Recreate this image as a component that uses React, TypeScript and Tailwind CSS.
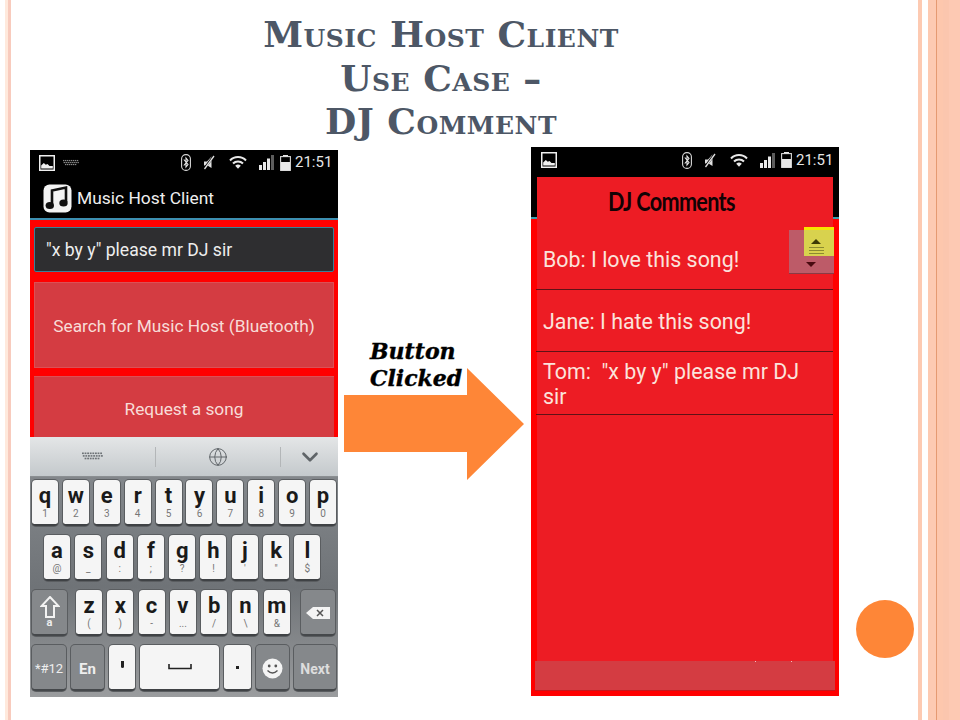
import React from 'react';
import { Globe, ChevronDown } from 'lucide-react';

const roboto = "font-['Roboto','Liberation_Sans',sans-serif]";

function ImageIcon() {
  return (
    <svg width="16" height="16" viewBox="0 0 16 16" className="block">
      <rect x="0.75" y="0.75" width="14.5" height="14.5" fill="#000" stroke="#f0f0f0" strokeWidth="1.5" />
      <path d="M2.2 13.5 L2.2 10.5 L4.8 8 L6.8 9.8 L8.5 9 L10.5 11 L13.8 11 L13.8 13.5 Z" fill="#f0f0f0" />
    </svg>
  );
}

function KeyboardIcon({ color = '#9a9a9a', width = 21, height = 9 }: { color?: string; width?: number; height?: number }) {
  const cells = [];
  for (let r = 0; r < 3; r++) {
    for (let c = 0; c < 8 - (r === 2 ? 2 : 0); c++) {
      cells.push(<rect key={`${r}-${c}`} x={c * 2.6 + (r === 2 ? 2.6 : 0) + (r === 1 ? 0.8 : 0)} y={r * 2.6 + 0.5} width="1.8" height="1.6" fill={color} />);
    }
  }
  return (
    <svg width={width} height={height} viewBox="0 0 21 9" className="block">
      {cells}
    </svg>
  );
}

function StatusIcons() {
  return (
    <>
      {/* bluetooth */}
      <svg width="10" height="17" viewBox="0 0 10 17" className="block">
        <rect x="0.6" y="0.6" width="8.8" height="15.8" rx="4.2" fill="none" stroke="#d8d8d8" strokeWidth="1.1" />
        <path d="M2.8 5.5 L7 10.5 L5 13 L5 4 L7 6.5 L2.8 11.5" fill="none" stroke="#e8e8e8" strokeWidth="1.1" />
      </svg>
      {/* mute */}
      <svg width="12" height="15" viewBox="0 0 12 15" className="block ml-[12px]">
        <path d="M1 10.5 L1 6.5 L4 6.5 L8.5 1.5 L8.5 13 L4.5 10.5 Z" fill="#e0e0e0" />
        <path d="M1 14 L11 0.5" stroke="#000" strokeWidth="2.2" />
        <path d="M1.5 14 L11 1" stroke="#e0e0e0" strokeWidth="1.3" />
      </svg>
      {/* wifi */}
      <svg width="18" height="13" viewBox="0 0 18 13" className="block ml-[14px]">
        <path d="M1 4.5 A11 11 0 0 1 17 4.5" fill="none" stroke="#e8e8e8" strokeWidth="2" />
        <path d="M4 7.5 A7 7 0 0 1 14 7.5" fill="none" stroke="#e8e8e8" strokeWidth="2" />
        <path d="M6.2 9.8 A4 4 0 0 1 11.8 9.8 L9 12.8 Z" fill="#e8e8e8" />
      </svg>
      {/* signal */}
      <svg width="15" height="15" viewBox="0 0 15 15" className="block ml-[12px]">
        <rect x="0" y="10" width="3" height="5" fill="#e8e8e8" />
        <rect x="4" y="7" width="3" height="8" fill="#e8e8e8" />
        <rect x="8" y="3.5" width="3" height="11.5" fill="#e8e8e8" />
        <rect x="12" y="0" width="3" height="15" fill="#5c5c5c" />
      </svg>
      {/* battery */}
      <svg width="11" height="16" viewBox="0 0 11 16" className="block ml-[6px]">
        <rect x="3" y="0" width="5" height="2" fill="#e8e8e8" />
        <rect x="0.6" y="1.6" width="9.8" height="13.8" fill="none" stroke="#d8d8d8" strokeWidth="1.1" />
        <rect x="1" y="7" width="9" height="8.5" fill="#e8e8e8" />
      </svg>
    </>
  );
}

function StatusBar({ keyboard }: { keyboard?: boolean }) {
  return (
    <div className={keyboard ? 'h-[28px] flex items-center bg-black pl-[9px] pb-[3px] shrink-0' : 'h-[28px] flex items-center bg-black pl-[10px] pb-[2px] shrink-0'}>
      <ImageIcon />
      {keyboard ? (
        <div className="ml-[8px]">
          <KeyboardIcon color="#8a8a8a" width={16} height={8} />
        </div>
      ) : null}
      <div className={keyboard ? 'flex items-center ml-[102px]' : 'flex items-center ml-[125px]'}>
        <StatusIcons />
      </div>
      <span className={`${roboto} ml-[4px] text-[15px] leading-none text-[#e6e6e6]`}>21:51</span>
    </div>
  );
}

function MusicIcon() {
  return (
    <svg width="29" height="29" viewBox="0 0 29 29" className="block">
      <rect x="0.5" y="0.5" width="28" height="28" rx="6" fill="#f4f4f4" />
      <path d="M9 20 L9 6.5 L23 3.5 L23 18" fill="none" stroke="#111" strokeWidth="2.6" />
      <ellipse cx="6.8" cy="21.5" rx="4.2" ry="3.5" fill="#111" />
      <ellipse cx="20.5" cy="19" rx="4.2" ry="3.5" fill="#111" />
    </svg>
  );
}

const keyShell = 'h-[46px] shrink-0 rounded-[4px] border-b-2 shadow-[0_0_0_1px_#5a5d60]';

function LetterKey({ top, sub, w = 'w-[26px]' }: { top: string; sub: string; w?: string }) {
  return (
    <div className={`${w} ${keyShell} bg-[#f5f5f5] border-[#3f4245] flex flex-col items-center ${roboto}`}>
      <span className="text-[22px] font-bold leading-[22px] mt-[5px] text-[#1a1a1a]">{top}</span>
      <span className="text-[10px] leading-[10px] mt-[2px] text-[#777]">{sub}</span>
    </div>
  );
}

function GrayKey({ w, children }: { w: string; children: React.ReactNode }) {
  return (
    <div className={`${w} ${keyShell} bg-[#85888b] border-[#45484b] flex flex-col items-center justify-center text-[#eeeeee] font-bold ${roboto}`}>
      {children}
    </div>
  );
}

function WhiteKey({ w, children }: { w: string; children: React.ReactNode }) {
  return (
    <div className={`${w} ${keyShell} bg-[#f5f5f5] border-[#3f4245] flex items-center justify-center`}>
      {children}
    </div>
  );
}

const row1 = [['q', '1'], ['w', '2'], ['e', '3'], ['r', '4'], ['t', '5'], ['y', '6'], ['u', '7'], ['i', '8'], ['o', '9'], ['p', '0']];
const row2 = [['a', '@'], ['s', '_'], ['d', ':'], ['f', ';'], ['g', '?'], ['h', '!'], ['j', "'"], ['k', '"'], ['l', '$']];
const row3 = [['z', '('], ['x', ')'], ['c', '-'], ['v', '...'], ['b', '/'], ['n', '\\'], ['m', '&']];

function Keyboard() {
  return (
    <div className="shrink-0">
      {/* toolbar */}
      <div className="h-[40px] flex items-center bg-gradient-to-b from-[#e4e6e7] to-[#c4c9cc] border-b border-[#8b8f92]">
        <div className="w-[125px] flex justify-center">
          <KeyboardIcon color="#6d7276" />
        </div>
        <div className="w-px h-[20px] bg-[#b3b6b8]" />
        <div className="w-[124px] flex justify-center">
          <Globe size={20} strokeWidth={1.2} color="#62676b" />
        </div>
        <div className="w-px h-[20px] bg-[#b3b6b8]" />
        <div className="flex-1 flex justify-center">
          <ChevronDown size={26} strokeWidth={2.4} color="#5f6468" />
        </div>
      </div>
      {/* keys */}
      <div className="h-[220px] bg-gradient-to-b from-[#83878b] via-[#6f7377] to-[#9a9c9e] pt-[3px] px-[2px] flex flex-col gap-[9px]">
        <div className="flex gap-[4.9px]">
          {row1.map(([a, b]) => (
            <LetterKey key={a} top={a} sub={b} />
          ))}
        </div>
        <div className="flex gap-[5.3px] pl-[12px]">
          {row2.map(([a, b]) => (
            <LetterKey key={a} top={a} sub={b} />
          ))}
        </div>
        <div className="flex">
          <GrayKey w="w-[35px]">
            <svg width="20" height="22" viewBox="0 0 20 22" className="block">
              <path d="M10 1 L18.5 10 L14 10 L14 21 L6 21 L6 10 L1.5 10 Z" fill="none" stroke="#f2f2f2" strokeWidth="2" />
            </svg>
            <span className="text-[11px] leading-[10px]">a</span>
          </GrayKey>
          <div className="flex gap-[5.3px] ml-[9px]">
            {row3.map(([a, b]) => (
              <LetterKey key={a} top={a} sub={b} />
            ))}
          </div>
          <div className="ml-[11px]">
            <GrayKey w="w-[34px]">
              <svg width="26" height="14" viewBox="0 0 26 14" className="block mt-[2px]">
                <path d="M1 7 L8 1 L25 1 L25 13 L8 13 Z" fill="#f4f4f4" />
                <path d="M12 4 L18 10 M18 4 L12 10" stroke="#555" strokeWidth="1.5" />
              </svg>
            </GrayKey>
          </div>
        </div>
        <div className="flex gap-[5px]">
          <GrayKey w="w-[34px]">
            <span className="text-[13px] font-normal whitespace-nowrap pt-[4px]">*#12</span>
          </GrayKey>
          <GrayKey w="w-[33px]">
            <span className="text-[15px] pt-[4px]">En</span>
          </GrayKey>
          <WhiteKey w="w-[26px]">
            <span className="block w-[3px] h-[7px] bg-[#222] rounded-b-[2px] -mt-[6px]" />
          </WhiteKey>
          <WhiteKey w="w-[79px]">
            <svg width="24" height="6" viewBox="0 0 24 6" className="block">
              <path d="M1 0 L1 4.5 L23 4.5 L23 0" fill="none" stroke="#222" strokeWidth="1.6" />
            </svg>
          </WhiteKey>
          <WhiteKey w="w-[27px]">
            <span className="block w-[3px] h-[3px] bg-[#222]" />
          </WhiteKey>
          <GrayKey w="w-[33px]">
            <svg width="21" height="21" viewBox="0 0 21 21" className="block mt-[3px]">
              <circle cx="10.5" cy="10.5" r="10" fill="#f4f4f4" />
              <circle cx="7.2" cy="8" r="1.4" fill="#555" />
              <circle cx="13.8" cy="8" r="1.4" fill="#555" />
              <path d="M5.5 12.5 Q10.5 17.5 15.5 12.5" fill="none" stroke="#555" strokeWidth="1.4" />
            </svg>
          </GrayKey>
          <GrayKey w="w-[42px]">
            <span className="text-[14px] text-[#dddddd] pt-[4px]">Next</span>
          </GrayKey>
        </div>
      </div>
    </div>
  );
}

function ClientPhone() {
  return (
    <div className="absolute left-[30px] top-[150px] w-[308px] h-[547px] flex flex-col bg-black">
      <StatusBar keyboard />
      <div className="h-[40px] shrink-0 flex items-center pl-[13px] bg-black">
        <MusicIcon />
        <span className={`${roboto} ml-[5px] text-[17.4px] text-[#eeeeee]`}>Music Host Client</span>
      </div>
      <div className="h-[2px] shrink-0 bg-[#3d8fb0]" />
      <div className="flex-1 min-h-0 bg-[#ff0000] px-[4px] pt-[7px] flex flex-col overflow-hidden">
        <div className={`${roboto} h-[45px] shrink-0 rounded-[2px] bg-[#2e2e30] border border-[#3a8098] flex items-center pl-[11px] pt-[2px] text-[17.6px] text-[#eeeeee]`}>
          "x by y" please mr DJ sir
        </div>
        <div className={`${roboto} mt-[10px] h-[86px] shrink-0 bg-[#d43c42] border border-[#dc5055] flex items-center justify-center pt-[4px] text-[17.3px] text-[#f8dcd8]`}>
          Search for Music Host (Bluetooth)
        </div>
        <div className={`${roboto} mt-[8px] h-[61px] shrink-0 bg-[#d43c42] border-t border-[#dc5055] flex items-center justify-center pt-[6px] text-[17.3px] text-[#f8dcd8]`}>
          Request a song
        </div>
      </div>
      <Keyboard />
    </div>
  );
}

function CommentRow({ h, children }: { h: string; children: React.ReactNode }) {
  return (
    <div className={`${h} shrink-0 flex items-center pl-[7px] pr-[26px] pt-[1px] border-b border-[#5f1216] ${roboto} text-[21.4px] leading-[25px] text-[#fbe3dc]`}>
      <p>{children}</p>
    </div>
  );
}

function CommentsPhone() {
  return (
    <div className="absolute left-[531px] top-[147px] w-[308px] h-[549px] flex flex-col bg-[#ff0000]">
      <StatusBar />
      <div className="h-[42px] shrink-0 bg-black" />
      <div className="h-[2px] shrink-0 bg-[#3aa0b0]" />
      <div className="flex-1" />
      {/* dialog */}
      <div className="absolute left-[6px] right-[6px] top-[30px] bottom-[5px] flex flex-col bg-[#ed1c24]">
        <div className="h-[50px] shrink-0 flex items-center justify-center pr-[28px] pb-[4px]">
          <span className="font-['Lato',sans-serif] font-bold text-[27px] leading-none tracking-[-0.8px] text-[#120204] scale-x-[0.8]">DJ Comments</span>
        </div>
        <div className="mt-[1px] -ml-[1px] flex flex-col">
          <CommentRow h="h-[62px]">Bob: I love this song!</CommentRow>
          <CommentRow h="h-[62px]">Jane: I hate this song!</CommentRow>
          <CommentRow h="h-[63px]">Tom:&nbsp; "x by y" please mr DJ sir</CommentRow>
        </div>
        <div className="flex-1" />
        <div className="relative h-[30px] -mx-[2px] shrink-0 bg-[#d43c42] border-b border-[#c8161c]">
          <span className="absolute left-[220px] top-0 w-px h-px bg-[#f5c0c0]" />
          <span className="absolute left-[256px] top-0 w-px h-px bg-[#f5c0c0]" />
        </div>
      </div>
      {/* scroll note */}
      <div className="absolute left-[258px] top-[83px] w-[45px] h-[44px] bg-[#bd5b68] border-b border-[#8a3a44]">
        <span className="absolute left-[17px] bottom-[6px] w-0 h-0 border-x-[5px] border-x-transparent border-t-[5px] border-t-[#4a0a10]" />
      </div>
      <div className="absolute left-[273px] top-[80px] w-[30px] h-[29px] bg-[#d8d24e] border-t-[3px] border-[#f6e600] flex flex-col items-center pr-[6px]">
        <span className="mt-[9px] w-0 h-0 border-x-[5px] border-x-transparent border-b-[5px] border-b-[#3d3a06]" />
        <span className="mt-[3px] w-[15px] h-[7px] border-y border-[#8c8a30] flex items-center">
          <span className="w-full h-px bg-[#8c8a30]" />
        </span>
      </div>
    </div>
  );
}

export default function App() {
  return (
    <div className="relative w-[960px] h-[720px] bg-white overflow-hidden">
      {/* slide edge stripes */}
      <div className="absolute inset-y-0 left-[5px] w-[3px] bg-[#ffe9dc]" />
      <div className="absolute inset-y-0 left-[8px] w-[3px] bg-[#f8cbbd]" />
      <div className="absolute inset-y-0 left-[918px] w-[4px] bg-[#fdcab2]" />
      <div className="absolute inset-y-0 left-[928px] right-0 flex bg-[#fdcab2]">
        <div className="w-[8px]" />
        <div className="w-px bg-[#e59a72]" />
        <div className="w-[6px] bg-[#fdc7ad]" />
        <div className="w-[6px] bg-[#fbc6ae]" />
        <div className="flex-1 bg-[#fdc9b3]" />
      </div>

      <h1 className="absolute left-0 top-[13px] w-[882px] text-center font-['DejaVu_Serif',serif] font-bold [font-variant:small-caps] text-[36px] leading-[43.5px] tracking-[0.5px] text-[#4d5766]">
        Music Host Client
        <br />
        Use Case –
        <br />
        DJ Comment
      </h1>

      <ClientPhone />
      <CommentsPhone />

      {/* arrow */}
      <svg width="180" height="112" viewBox="0 0 180 112" className="absolute left-[344px] top-[368px]">
        <path d="M0 27 L123 27 L123 0 L180 56 L123 112 L123 84 L0 84 Z" fill="#fe8637" />
      </svg>
      <div className="absolute left-[370px] top-[338px] bg-white font-['DejaVu_Serif',serif] font-bold italic text-[22px] leading-[27px] [-webkit-text-stroke:0.4px_black] text-black">
        Button
        <br />
        Clicked
      </div>

      <div className="absolute left-[856px] top-[600px] w-[58px] h-[58px] rounded-full bg-[#fe8637]" />
    </div>
  );
}
